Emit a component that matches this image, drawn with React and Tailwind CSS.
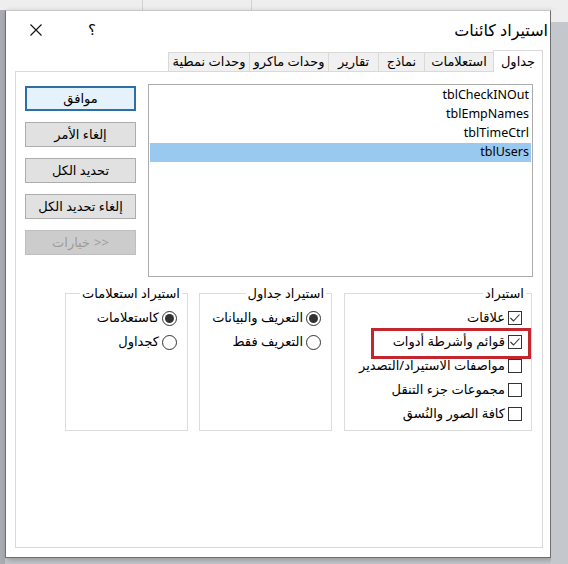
import { useState } from "react";

const tabs = [
  { label: "جداول", w: "w-[50px]" },
  { label: "استعلامات", w: "w-[69px]" },
  { label: "نماذج", w: "w-[46px]" },
  { label: "تقارير", w: "w-[50px]" },
  { label: "وحدات ماكرو", w: "w-[79px]" },
  { label: "وحدات نمطية", w: "w-[81px]" },
];

const tablas = ["tblCheckINOut", "tblEmpNames", "tblTimeCtrl", "tblUsers"];

function Check({ checked }) {
  return (
    <span className="w-[14px] h-[14px] border border-[#333] bg-white flex items-center justify-center shrink-0">
      {checked && (
        <svg width="12" height="12" viewBox="0 0 12 12" fill="none">
          <path d="M1.5 6 L4.5 9 L10.5 2.5" stroke="#333" strokeWidth="1.1" />
        </svg>
      )}
    </span>
  );
}

function Radio({ checked }) {
  return (
    <span className="w-[15px] h-[15px] rounded-full border border-[#333] bg-white flex items-center justify-center shrink-0">
      {checked && <span className="w-[9px] h-[9px] rounded-full bg-[#333]" />}
    </span>
  );
}

function Boton({ children, tipo }) {
  let cls = "bg-[#e1e1e1] border border-[#adadad] text-black";
  if (tipo === "default") cls = "bg-[#e5f1fb] border-2 border-[#2c6ea6] text-black";
  if (tipo === "disabled") cls = "bg-[#cccccc] border border-[#bfbfbf] text-[#9c9c9c]";
  return (
    <div className={`w-[111px] h-[25px] flex items-center justify-center text-[13px] ${cls}`}>
      {children}
    </div>
  );
}

export default function App() {
  const [tab, setTab] = useState(0);
  const [sel, setSel] = useState(3);

  return (
    <div className="w-[568px] h-[564px] overflow-hidden bg-[#c4c7cb] font-['Noto_Sans','DejaVu_Sans',sans-serif] text-black">
      {/* fondo superior */}
      <div className="h-[10px] bg-[#eeeeee] flex">
        <div className="w-[143px] border-r border-[#d2d2d2]" />
        <div className="w-[109px] border-r border-[#d2d2d2]" />
      </div>

      <div className="flex">
        <div className="w-[5px] h-[554px] bg-[#a9acb1]" />

        {/* DIALOGO */}
        <div
          dir="rtl"
          className="w-[546px] h-[548px] bg-white border border-[#6e6e6e] border-t-[#c8c8c8] shadow-[2px_2px_6px_rgba(0,0,0,0.25)] flex flex-col"
        >
          <div className="h-[37px] flex items-center">
            <span className="pr-[2px] text-[16px] leading-none">استيراد كائنات</span>
            <div className="flex-1" />
            <span className="w-[14px] text-center text-[15px] leading-none ml-[43px]">؟</span>
            <svg className="ml-[24px]" width="12" height="12" viewBox="0 0 12 12">
              <path d="M0.5 0.5 L11.5 11.5 M11.5 0.5 L0.5 11.5" stroke="#111" strokeWidth="1.1" />
            </svg>
          </div>

          <div className="flex-1 flex flex-col pl-[9px] pr-[7px] pb-[9px]">
            {/* pestañas */}
            <div className="h-[23px] flex items-end">
              {tabs.map((t, i) =>
                i === tab ? (
                  <div
                    key={i}
                    onClick={() => setTab(i)}
                    className={`${t.w} h-[22px] -mb-px relative z-10 bg-white border border-b-0 border-[#d9d9d9] flex items-center justify-center text-[13px]`}
                  >
                    {t.label}
                  </div>
                ) : (
                  <div
                    key={i}
                    onClick={() => setTab(i)}
                    className={`${t.w} h-[19px] bg-[#f0f0f0] border border-b-0 border-r-0 border-[#d9d9d9] flex items-center justify-center text-[13px]`}
                  >
                    {t.label}
                  </div>
                )
              )}
            </div>

            <div className="flex-1 border border-[#d9d9d9] bg-white">
              <div className="flex pt-[12px] pr-[9px] gap-[12px]">
                {/* lista */}
                <div className="w-[385px] h-[193px] border border-[#acacac] p-px">
                  {tablas.map((n, i) => (
                    <div
                      key={n}
                      onClick={() => setSel(i)}
                      className={`h-[19px] flex items-center pr-[2px] text-[12.5px] ${
                        sel === i ? "bg-[#99c9ef]" : ""
                      }`}
                    >
                      {n}
                    </div>
                  ))}
                </div>

                {/* botones */}
                <div className="flex flex-col gap-[11px] mt-[2px]">
                  <Boton tipo="default">موافق</Boton>
                  <Boton>إلغاء الأمر</Boton>
                  <Boton>تحديد الكل</Boton>
                  <Boton>إلغاء تحديد الكل</Boton>
                  <Boton tipo="disabled">
                    <div className="flex items-center gap-[4px]">
                      <span>{"\u200E>>\u200E"}</span>
                      <span>خيارات</span>
                    </div>
                  </Boton>
                </div>
              </div>

              {/* grupos */}
              <div className="flex pr-[10px] mt-[7px]">
                <fieldset className="w-[188px] h-[147px] border border-[#dcdcdc]">
                  <legend className="mr-[5px] px-[2px] text-[13px] leading-[18px]">استيراد</legend>
                  <div className="pt-[4px] pr-[9px] text-[13px]">
                    <div className="h-[24px] flex items-center gap-[3px]">
                      <Check checked />
                      <span>علاقات</span>
                    </div>
                    <div className="h-[24px] flex items-center gap-[3px] relative">
                      <Check checked />
                      <span>قوائم وأشرطة أدوات</span>
                      <span className="absolute top-[-2px] bottom-[-5px] left-[26px] right-[-9px] border-[3px] border-[#c4262e]" />
                    </div>
                    <div className="h-[24px] flex items-center gap-[3px]">
                      <Check />
                      <span>مواصفات الاستيراد/التصدير</span>
                    </div>
                    <div className="h-[24px] flex items-center gap-[3px]">
                      <Check />
                      <span>مجموعات جزء التنقل</span>
                    </div>
                    <div className="h-[24px] flex items-center gap-[3px]">
                      <Check />
                      <span>كافة الصور والنُسق</span>
                    </div>
                  </div>
                </fieldset>

                <fieldset className="w-[133px] h-[147px] border border-[#dcdcdc] mr-[12px]">
                  <legend className="mr-[5px] px-[2px] text-[13px] leading-[18px]">استيراد جداول</legend>
                  <div className="pt-[4px] pr-[10px] text-[13px]">
                    <div className="h-[24px] flex items-center gap-[3px]">
                      <Radio checked />
                      <span>التعريف والبيانات</span>
                    </div>
                    <div className="h-[24px] flex items-center gap-[3px]">
                      <Radio />
                      <span>التعريف فقط</span>
                    </div>
                  </div>
                </fieldset>

                <fieldset className="w-[123px] h-[147px] border border-[#dcdcdc] mr-[11px]">
                  <legend className="mr-[5px] px-[2px] text-[13px] leading-[18px]">استيراد استعلامات</legend>
                  <div className="pt-[4px] pr-[10px] text-[13px]">
                    <div className="h-[24px] flex items-center gap-[3px]">
                      <Radio checked />
                      <span>كاستعلامات</span>
                    </div>
                    <div className="h-[24px] flex items-center gap-[3px]">
                      <Radio />
                      <span>كجداول</span>
                    </div>
                  </div>
                </fieldset>
              </div>
            </div>
          </div>
        </div>

        <div className="flex-1 h-[554px] flex flex-col">
          <div className="h-[12px] bg-[#eeeeee]" />
          <div className="flex-1 bg-[#c4c7cb]" />
        </div>
      </div>
    </div>
  );
}
